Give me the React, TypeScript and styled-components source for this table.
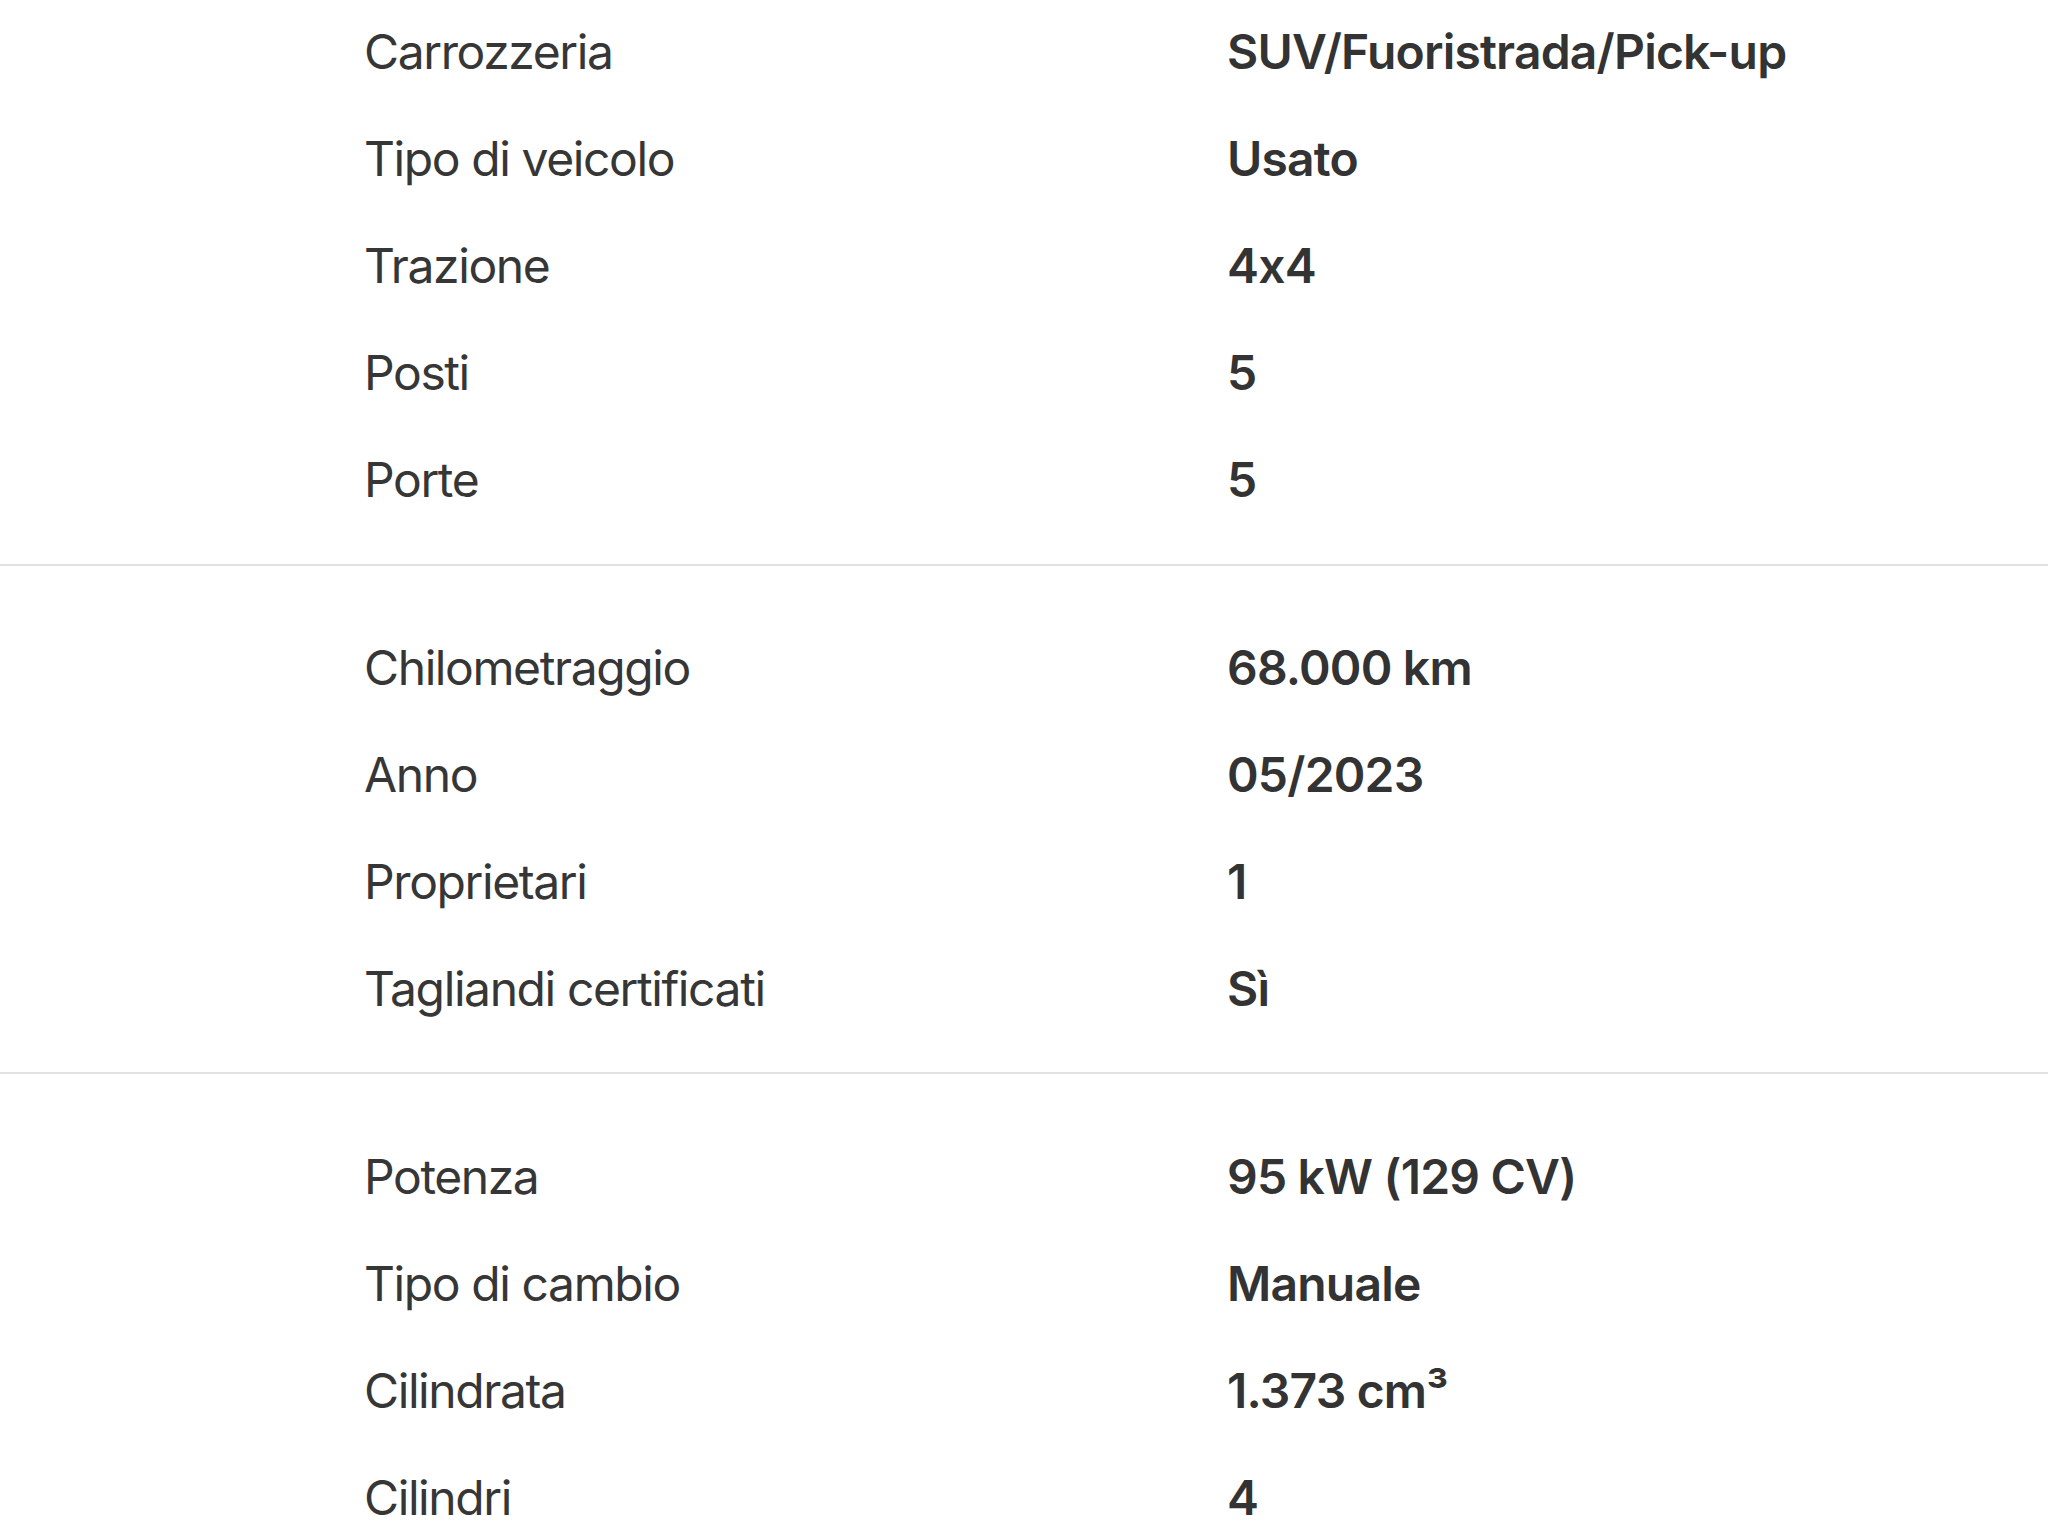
import React from 'react';
import styled, { createGlobalStyle } from 'styled-components';

const GlobalStyle = createGlobalStyle`
  html, body {
    margin: 0;
    padding: 0;
    background: #ffffff;
  }

  body {
    font-family: Inter, "Noto Sans", "Liberation Sans", sans-serif;
    -webkit-font-smoothing: antialiased;
  }
`;

const Page = styled.div`
  width: 2048px;
  height: 1536px;
  overflow: hidden;
  background: #ffffff;
`;

const Section = styled.section<{ $top: number; $bottom: number }>`
  margin-top: ${(p) => (p.$top < 0 ? p.$top : 0)}px;
  padding: ${(p) => Math.max(p.$top, 0)}px 0 ${(p) => p.$bottom}px 0;
  border-bottom: 2px solid #e2e2e2;

  &:last-child {
    border-bottom: none;
  }
`;

const Row = styled.div`
  height: 107px;
  display: grid;
  grid-template-columns: 863px 1fr;
  align-items: center;
  padding-left: 364px;
`;

const Label = styled.div`
  font-size: 48px;
  font-weight: 400;
  color: #363636;
  letter-spacing: -1.4px;
`;

const Value = styled.div`
  font-size: 48px;
  font-weight: 600;
  color: #333333;
  letter-spacing: -0.8px;
`;

type Spec = [string, string];

type Group = { top: number; bottom: number; rows: Spec[] };

const groups: Group[] = [
  {
    top: -2,
    bottom: 31,
    rows: [
      ['Carrozzeria', 'SUV/Fuoristrada/Pick-up'],
      ['Tipo di veicolo', 'Usato'],
      ['Trazione', '4x4'],
      ['Posti', '5'],
      ['Porte', '5'],
    ],
  },
  {
    top: 48,
    bottom: 30,
    rows: [
      ['Chilometraggio', '68.000 km'],
      ['Anno', '05/2023'],
      ['Proprietari', '1'],
      ['Tagliandi certificati', 'Sì'],
    ],
  },
  {
    top: 49,
    bottom: 0,
    rows: [
      ['Potenza', '95 kW (129 CV)'],
      ['Tipo di cambio', 'Manuale'],
      ['Cilindrata', '1.373 cm³'],
      ['Cilindri', '4'],
    ],
  },
];

const App = () => {
  return (
    <>
      <GlobalStyle />
      <Page>
        {groups.map((group, i) => (
          <Section key={i} $top={group.top} $bottom={group.bottom}>
            {group.rows.map(([label, value]) => (
              <Row key={label}>
                <Label>{label}</Label>
                <Value>{value}</Value>
              </Row>
            ))}
          </Section>
        ))}
      </Page>
    </>
  );
};

export default App;
